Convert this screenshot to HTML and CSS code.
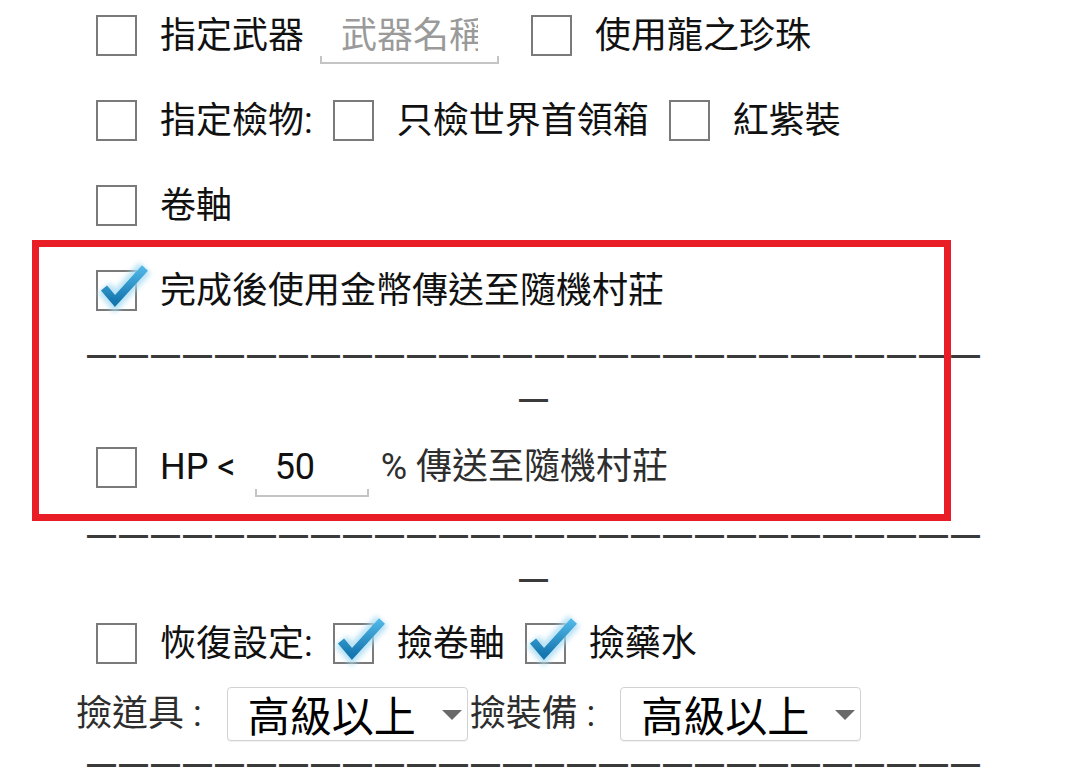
FILE: index.html
```html
<!DOCTYPE html>
<html lang="zh-Hant">
<head>
<meta charset="utf-8">
<title>設定</title>
<link rel="stylesheet" href="styles.css">
</head>
<body>
<main class="panel">
  <div class="row">
    <span class="cb"></span><span class="lbl">指定武器</span>
    <input class="field field-weapon" type="text" placeholder="武器名稱">
    <span class="cb"></span><span class="lbl">使用龍之珍珠</span>
  </div>
  <div class="row">
    <span class="cb"></span><span class="lbl">指定檢物:</span>
    <span class="cb"></span><span class="lbl">只檢世界首領箱</span>
    <span class="cb"></span><span class="lbl">紅紫裝</span>
  </div>
  <div class="row">
    <span class="cb"></span><span class="lbl">卷軸</span>
  </div>
  <div class="row">
    <svg class="cb-checked" viewBox="0 0 41 41"><defs><filter id="g1" x="-50%" y="-50%" width="200%" height="200%"><feGaussianBlur stdDeviation="2.5"/></filter><linearGradient id="b1" x1="0" y1="0" x2="0" y2="1"><stop offset="0" stop-color="#4fb6e6"/><stop offset="1" stop-color="#1577b0"/></linearGradient></defs><rect x="1" y="1" width="39" height="39" fill="#fff" stroke="#7a7a7a" stroke-width="2"/><path d="M8 18 L19 31 L49 -2" fill="none" stroke="#a8dcf3" stroke-width="16" filter="url(#g1)" opacity="0.8"/><path d="M8 18 L19 31 L49 -2" fill="none" stroke="url(#b1)" stroke-width="8"/></svg>
    <span class="lbl">完成後使用金幣傳送至隨機村莊</span>
  </div>
  <div class="sep">—————————————————————————————</div>
  <div class="row row-hp">
    <span class="cb"></span><span class="lbl">HP &lt;</span>
    <input class="field field-hp" type="text" value="50">
    <span class="lbl lbl-soft">% 傳送至隨機村莊</span>
  </div>
  <div class="sep">—————————————————————————————</div>
  <div class="row">
    <span class="cb"></span><span class="lbl">恢復設定:</span>
    <svg class="cb-checked" viewBox="0 0 41 41"><rect x="1" y="1" width="39" height="39" fill="#fff" stroke="#7a7a7a" stroke-width="2"/><path d="M8 18 L19 31 L49 -2" fill="none" stroke="#a8dcf3" stroke-width="16" filter="url(#g1)" opacity="0.8"/><path d="M8 18 L19 31 L49 -2" fill="none" stroke="url(#b1)" stroke-width="8"/></svg>
    <span class="lbl">撿卷軸</span>
    <svg class="cb-checked" viewBox="0 0 41 41"><rect x="1" y="1" width="39" height="39" fill="#fff" stroke="#7a7a7a" stroke-width="2"/><path d="M8 18 L19 31 L49 -2" fill="none" stroke="#a8dcf3" stroke-width="16" filter="url(#g1)" opacity="0.8"/><path d="M8 18 L19 31 L49 -2" fill="none" stroke="url(#b1)" stroke-width="8"/></svg>
    <span class="lbl">撿藥水</span>
  </div>
  <div class="row row-select">
    <span class="lbl lbl-soft sel-lbl">撿道具 :</span>
    <span class="select"><span class="select-text">高級以上</span></span>
    <span class="lbl lbl-soft sel-lbl sel-lbl2">撿裝備 :</span>
    <span class="select"><span class="select-text">高級以上</span></span>
  </div>
  <div class="sep">—————————————————————————————</div>
</main>
<div class="red-mark"></div>
</body>
</html>
```
FILE: styles.css
```css
html, body {
  margin: 0;
  padding: 0;
  background: #fff;
  overflow: hidden;
}

body {
  font-family: Roboto, "Noto Sans CJK TC", sans-serif;
  color: #111;
}

.panel {
  width: 918px;
  margin: -7px 0 0 76px;
}

.row {
  display: flex;
  align-items: center;
  height: 85px;
}

.row-hp {
  height: 92px;
}

.row-select {
  height: 56px;
}

.lbl {
  font-size: 36px;
  line-height: 44px;
  white-space: nowrap;
}

.lbl-soft {
  color: #2e2e2e;
}

.cb {
  flex: none;
  box-sizing: border-box;
  width: 41px;
  height: 41px;
  border: 2px solid #7a7a7a;
  background: #fff;
  margin: 0 23px 0 20px;
}

.cb-checked {
  flex: none;
  width: 41px;
  height: 41px;
  overflow: visible;
  margin: 0 23px 0 20px;
}

.field {
  flex: none;
  box-sizing: border-box;
  border: none;
  outline: none;
  font-family: Roboto, "Noto Sans CJK TC", sans-serif;
  font-size: 36px;
  color: #111;
  background:
    linear-gradient(#c4c4c4, #c4c4c4) left bottom / 100% 2px no-repeat,
    linear-gradient(#c4c4c4, #c4c4c4) left bottom / 2px 8px no-repeat,
    linear-gradient(#c4c4c4, #c4c4c4) right bottom / 2px 8px no-repeat;
}

.field::placeholder {
  color: #9a9a9a;
}

.field-weapon {
  width: 179px;
  height: 56px;
  padding: 0 21px 0 21px;
  margin: 0 12px 0 16px;
}

.field-hp {
  width: 114px;
  height: 60px;
  padding: 0 20px;
  margin: 0 12px 0 19px;
}

.sep {
  font-family: "Liberation Sans", sans-serif;
  font-size: 29px;
  font-weight: bold;
  letter-spacing: 3px;
  line-height: 44px;
  color: #3a3a3a;
  text-align: center;
  word-break: break-all;
  line-break: anywhere;
}

.sel-lbl {
  margin-right: 25px;
}

.sel-lbl2 {
  margin-left: 2px;
}

.select {
  position: relative;
  flex: none;
  box-sizing: border-box;
  width: 241px;
  height: 54px;
  border: 1px solid #d2d2d2;
  border-radius: 4px;
  background: #fff;
  box-shadow: 0 1px 1px rgba(0, 0, 0, 0.06);
  display: flex;
  align-items: center;
  padding-left: 20px;
}

.select::after {
  content: "";
  position: absolute;
  right: 5px;
  top: 22px;
  border-left: 10px solid transparent;
  border-right: 10px solid transparent;
  border-top: 10px solid #6a6a6a;
}

.select-text {
  font-family: "Noto Sans CJK TC", sans-serif;
  font-size: 42px;
  line-height: 52px;
  color: #000;
}

.red-mark {
  position: absolute;
  left: 32px;
  top: 240px;
  width: 919px;
  height: 281px;
  box-sizing: border-box;
  border: 7px solid #e81d25;
  pointer-events: none;
}
```
